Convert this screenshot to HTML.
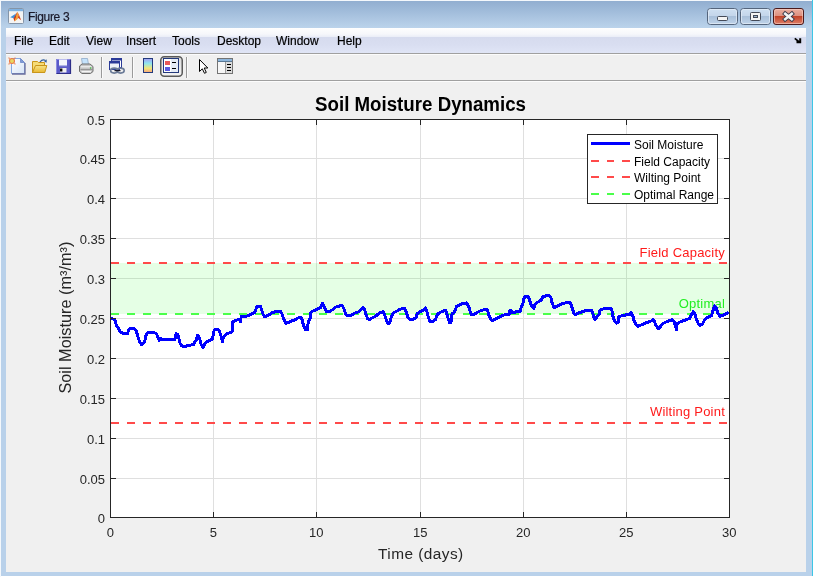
<!DOCTYPE html>
<html><head><meta charset="utf-8">
<style>
html,body{margin:0;padding:0;width:814px;height:577px;overflow:hidden;background:#fff;}
body{position:relative;font-family:"Liberation Sans",sans-serif;}
.abs{position:absolute;}
svg,.menu,.ttxt{will-change:transform;}
#frame{left:0;top:0;width:813px;height:576px;background:#b9d1ea;}
#edgeL{left:0;top:0;width:1px;height:577px;background:#f4f8fc;}
#edgeT{left:0;top:0;width:813px;height:1px;background:#f4f8fc;}
#title{left:1px;top:1px;width:811px;height:27px;background:linear-gradient(#91aed0,#bbd3eb);}
#cyan{left:812px;top:0;width:1px;height:576px;background:#3cc6e6;}
#menubar{left:6px;top:28px;width:800px;height:25px;background:linear-gradient(#fefefe 0,#f6f7fb 6px,#eceff8 8.5px,#d6dbee 9.5px,#d9def1 17px,#e0e5f6 25px);}
#menuline{left:6px;top:53px;width:800px;height:1px;background:#a0a0a0;}
#toolbar{left:6px;top:54px;width:800px;height:26px;background:linear-gradient(#fcfcfc 0,#fcfcfc 1px,#f0f0f0 1px);}
#toolline{left:6px;top:80px;width:800px;height:1px;background:#a0a0a0;}
#figbg{left:6px;top:81px;width:800px;height:491px;background:linear-gradient(#fcfcfc 0,#fcfcfc 1px,#f0f0f0 1px);}
.menu{position:absolute;top:34px;font-size:12px;color:#000;-webkit-text-stroke:0.2px #000;}
.ttxt{position:absolute;left:28px;top:10px;font-size:12px;letter-spacing:-0.35px;color:#1a1a2a;-webkit-text-stroke:0.2px #1a1a2a;}
</style></head><body>
<div id="frame" class="abs"></div>
<div id="edgeL" class="abs"></div>
<div id="edgeT" class="abs"></div>
<div id="title" class="abs"></div>
<div id="cyan" class="abs"></div>
<div id="menubar" class="abs"></div>
<div id="menuline" class="abs"></div>
<div id="toolbar" class="abs"></div>
<div id="toolline" class="abs"></div>
<div id="figbg" class="abs"></div>
<div class="ttxt">Figure 3</div>
<div class="menu" style="left:14px">File</div>
<div class="menu" style="left:49px">Edit</div>
<div class="menu" style="left:86px">View</div>
<div class="menu" style="left:126px">Insert</div>
<div class="menu" style="left:172px">Tools</div>
<div class="menu" style="left:217px">Desktop</div>
<div class="menu" style="left:276px">Window</div>
<div class="menu" style="left:337px">Help</div>

<svg class="abs" style="left:0;top:0" width="814" height="90" viewBox="0 0 814 90">
  <defs>
    <linearGradient id="tb" x1="0" y1="0" x2="0" y2="1">
      <stop offset="0" stop-color="#cfe0f2"/><stop offset="0.5" stop-color="#c3d5ea"/>
      <stop offset="0.5" stop-color="#a9c0da"/><stop offset="1" stop-color="#c0d4ea"/>
    </linearGradient>
    <linearGradient id="cb" x1="0" y1="0" x2="0" y2="1">
      <stop offset="0" stop-color="#eab0a2"/><stop offset="0.5" stop-color="#dc8d7c"/>
      <stop offset="0.5" stop-color="#c24329"/><stop offset="1" stop-color="#e0826b"/>
    </linearGradient>
    <linearGradient id="cbar" x1="0" y1="0" x2="0" y2="1">
      <stop offset="0" stop-color="#a49cf4"/><stop offset="0.35" stop-color="#8ee6ee"/>
      <stop offset="0.7" stop-color="#f2e676"/><stop offset="1" stop-color="#f8a47e"/>
    </linearGradient>
    <linearGradient id="page" x1="0" y1="0" x2="1" y2="1">
      <stop offset="0" stop-color="#ffffff"/><stop offset="1" stop-color="#d6e4f6"/>
    </linearGradient>
    <linearGradient id="fold" x1="0" y1="0" x2="0" y2="1">
      <stop offset="0" stop-color="#f8e48a"/><stop offset="1" stop-color="#e8b830"/>
    </linearGradient>
    <linearGradient id="pbtn" x1="0" y1="0" x2="0" y2="1">
      <stop offset="0" stop-color="#dcdcdc"/><stop offset="1" stop-color="#f4f4f4"/>
    </linearGradient>
  </defs>
  <!-- title icon -->
  <rect x="8.5" y="8.5" width="15" height="15" rx="1" fill="#f4f4f4" stroke="#8595a8"/>
  <rect x="9" y="9" width="14" height="2" fill="#7fb2e2"/>
  <path d="M9 11.5H23" stroke="#c8dcef" stroke-width="0.6"/>
  <path d="M10.2 17.3L16 13.4L14.6 18.6Z" fill="#3f90d8"/>
  <path d="M13.6 18.6L17.3 11.8L16.5 17L14.4 21.5Z" fill="#c83a1a"/>
  <path d="M17.3 11.8L18.5 15.5L17 19.5L14.4 21.5L16.2 16.5Z" fill="#f4a02e"/>
  <path d="M17.3 11.8L19 14.8L21.2 20.2L18.2 18L17 19.5L18.5 15.5Z" fill="#dc4a20"/>
  <!-- title buttons -->
  <rect x="707.5" y="8.5" width="30" height="16" rx="3" fill="url(#tb)" stroke="#55657c"/>
  <rect x="708.5" y="9.5" width="28" height="14" rx="2" fill="none" stroke="#e6eef8" stroke-opacity="0.7"/>
  <rect x="717.5" y="16.5" width="10" height="4" rx="1" fill="#f4f4f4" stroke="#444a58"/>
  <rect x="740.5" y="8.5" width="30" height="16" rx="3" fill="url(#tb)" stroke="#55657c"/>
  <rect x="741.5" y="9.5" width="28" height="14" rx="2" fill="none" stroke="#e6eef8" stroke-opacity="0.7"/>
  <rect x="750.5" y="12.5" width="10" height="8" rx="1" fill="#f4f4f4" stroke="#444a58"/>
  <rect x="753.5" y="15.5" width="4" height="2" fill="#9fb6d0" stroke="#444a58"/>
  <rect x="773.5" y="8.5" width="30" height="16" rx="2.5" fill="url(#cb)" stroke="#4a1a1c"/>
  <rect x="774.5" y="9.5" width="28" height="14" rx="2" fill="none" stroke="#f6d0c6" stroke-opacity="0.6"/>
  <path d="M785.2 13.8L791.8 19.2M791.8 13.8L785.2 19.2" stroke="#3a3a4a" stroke-width="4.4" stroke-linecap="square"/>
  <path d="M785.2 13.8L791.8 19.2M791.8 13.8L785.2 19.2" stroke="#f2f2f2" stroke-width="2.6" stroke-linecap="square"/>
  <!-- dock arrow -->
  <path d="M794.8 38.4L799.2 42" stroke="#000" stroke-width="1.7"/><path d="M796.5 41H799.2V38.2H801.2V43.2H796.5Z" fill="#000"/>
  <!-- toolbar icons -->
  <!-- new -->
  <path d="M11.5 58.5H20.5L24.5 62.5V73.5H11.5Z" fill="url(#page)" stroke="#86a6e0"/>
  <path d="M12 74H25V63" stroke="#6a6e9c" fill="none" stroke-width="1.3"/>
  <path d="M20.5 58.5V62.5H24.5Z" fill="#7f9ad6" stroke="#6c86c8" stroke-width="0.8"/>
  <circle cx="12" cy="61" r="2.5" fill="#e8d860" stroke="#ec7a48" stroke-width="1.1"/>
  <path d="M8.6 57.6L9.6 58.6M15.4 57.6L14.4 58.6M8.6 64.4L9.6 63.4M15.4 64.4L14.4 63.4" stroke="#ec7a48" stroke-width="1.1"/>
  <!-- open -->
  <path d="M32.5 72.5V61.5H37.5L38.5 62.5H44.5V72.5Z" fill="#f6dc78" stroke="#c9951a"/>
  <path d="M35.5 65.5H46.8L44.8 72.5H32.5Z" fill="url(#fold)" stroke="#c9951a"/>
  <path d="M40 62Q42.5 58.8 45.6 60.6" stroke="#35609c" stroke-width="1.2" fill="none"/>
  <path d="M44.2 61.6L46.8 59.2L46.6 62.8Z" fill="#35609c"/>
  <!-- save -->
  <rect x="56" y="59" width="14.5" height="14.5" fill="#5a5ac8"/>
  <path d="M56.5 73.5V59.5H70" stroke="#8a8ae0" stroke-width="1" fill="none"/>
  <path d="M56.5 73.5H70.5V59.5" stroke="#2e2e88" stroke-width="1.2" fill="none"/>
  <rect x="59" y="59.5" width="8" height="6" fill="#f2f4fb"/>
  <path d="M59 65.8H67" stroke="#b8bce8" stroke-width="0.8"/>
  <rect x="60" y="68" width="6.5" height="4.5" fill="#f0f0f0"/>
  <rect x="60" y="68.5" width="2.4" height="3" fill="#0c0c0c"/>
  <!-- print -->
  <path d="M81.5 58.5H87.5L88.5 64.5H82.5Z" fill="#c4e2fb" stroke="#90aac8" stroke-width="0.8"/>
  <path d="M79.5 66L82 64H90L93 66.5V71.5L90.5 73.5H82L79.5 71.5Z" fill="#c4c4c4" stroke="#6e6e6e"/>
  <path d="M81 66.8H91.5" stroke="#f2f2f2" stroke-width="1.2"/>
  <path d="M80.5 69.5H92.5" stroke="#8a8a8a" stroke-width="0.8"/>
  <path d="M81.5 71.6H91" stroke="#f4f4f4" stroke-width="1.2"/>
  <circle cx="90.6" cy="68" r="0.8" fill="#35c035"/>
  <!-- separators -->
  <path d="M101.5 57V78M132.5 57V78M186.5 57V78" stroke="#9a9a9a" stroke-width="1"/>
  <path d="M102.5 57V78M133.5 57V78M187.5 57V78" stroke="#ffffff" stroke-width="1" stroke-opacity="0.7"/>
  <!-- link -->
  <rect x="111.5" y="58.5" width="10" height="9" fill="#fff" stroke="#2a3a98"/>
  <rect x="111" y="58" width="11" height="2.5" fill="#2a3a98"/>
  <rect x="109.5" y="61.5" width="10" height="8" fill="#eef2f8" stroke="#2a3a98"/>
  <rect x="109" y="61" width="11" height="2.5" fill="#2a3a98"/>
  <ellipse cx="114.2" cy="70.6" rx="3.6" ry="2.5" fill="none" stroke="#6c7c98" stroke-width="1.6"/>
  <ellipse cx="120.6" cy="70.6" rx="3.6" ry="2.5" fill="none" stroke="#6c7c98" stroke-width="1.6"/>
  <path d="M114.5 70.6H120.5" stroke="#1a1a2a" stroke-width="1.3"/>
  <!-- colorbar -->
  <rect x="143.5" y="58.5" width="9" height="14" fill="url(#cbar)" stroke="#243a7c"/>
  <!-- legend pressed -->
  <rect x="160.75" y="56.75" width="21.5" height="19.5" rx="3.5" fill="url(#pbtn)" stroke="#5a5a5a" stroke-width="1.5"/>
  <rect x="163.5" y="58.5" width="15" height="14" fill="#fff" stroke="#243a7c"/>
  <rect x="171" y="59" width="7" height="13" fill="#e6ecf6"/>
  <rect x="165" y="61" width="5" height="4" fill="#e85858"/>
  <rect x="165" y="67" width="5" height="4" fill="#5a5ae0"/>
  <path d="M172 62.5H176M172 68.5H176" stroke="#000" stroke-width="1.2"/>
  <!-- arrow cursor -->
  <path d="M199.5 59.5V71.5L202.3 68.8L204.5 73.3L206.3 72.4L204.2 68H207.8Z" fill="#fff" stroke="#000" stroke-width="1" stroke-linejoin="miter"/>
  <!-- property -->
  <rect x="217.5" y="58.5" width="15" height="15" fill="#f6f6f6" stroke="#747474"/>
  <rect x="218" y="59" width="14" height="2.5" fill="#8db6dc"/>
  <path d="M218 61.5H232" stroke="#5a7894" stroke-width="1"/>
  <rect x="226" y="62" width="6" height="11" fill="#dcdcdc"/>
  <path d="M225.5 62V73" stroke="#9a9a9a"/>
  <path d="M227 64.5H231M227 67.5H231M227 70.5H231" stroke="#000" stroke-width="1.2"/>
</svg>


<svg class="abs" style="left:0;top:0" width="814" height="577" viewBox="0 0 814 577">
  <defs><clipPath id="ax"><rect x="110" y="119" width="620" height="399"/></clipPath></defs>
  <rect x="110" y="119" width="620" height="399" fill="#fff"/>
  <path d="M213.5 120V517M316.5 120V517M420.5 120V517M523.5 120V517M626.5 120V517M111 478.5H729M111 438.5H729M111 398.5H729M111 358.5H729M111 318.5H729M111 278.5H729M111 238.5H729M111 198.5H729M111 158.5H729" stroke="#dfdfdf" stroke-width="1" fill="none" shape-rendering="crispEdges"/>
  <rect x="111" y="263" width="618" height="51" fill="#00ff00" fill-opacity="0.1"/>
  <g stroke-width="2" fill="none" stroke-dasharray="8 8" shape-rendering="crispEdges">
    <path d="M111 263H729" stroke="#ff4a4a"/>
    <path d="M111 423H729" stroke="#ff4a4a"/>
    <path d="M111 314H729" stroke="#4aff4a"/>
  </g>
  <g font-family="Liberation Sans" font-size="13" letter-spacing="0.22">
    <text x="725" y="257" text-anchor="end" fill="#ff1a1a">Field Capacity</text>
    <text x="725" y="308" text-anchor="end" fill="#22ee22">Optimal</text>
    <text x="725" y="416" text-anchor="end" fill="#ff1a1a">Wilting Point</text>
  </g>
  <path clip-path="url(#ax)" d="M110.6 318.6 L113.9 319.2 L115.6 321.2 L116.2 324.8 L118.5 328.5 L120.2 331.8 L122.5 333.1 L127.8 333.4 L128.4 329.8 L129.7 328.5 L134.4 329.0 L136.3 331.1 L137.6 335.7 L139.6 341.6 L141.9 344.9 L144.9 341.0 L145.9 335.7 L147.5 332.8 L150.2 332.4 L155.4 333.1 L156.6 334.1 L158.0 337.8 L159.3 340.4 L160.9 338.4 L162.2 339.4 L174.8 339.4 L176.1 333.8 L177.7 334.5 L178.7 337.8 L179.7 342.4 L181.0 345.0 L182.7 346.3 L186.0 346.3 L188.6 345.3 L193.9 344.7 L194.5 341.7 L196.2 340.4 L197.5 335.5 L199.1 337.1 L200.5 341.7 L201.3 344.9 L203.0 347.2 L204.3 344.9 L205.9 342.3 L208.6 341.0 L212.8 338.7 L213.2 334.4 L214.2 330.4 L215.8 329.5 L217.8 329.0 L219.4 331.4 L221.1 336.4 L222.4 341.6 L223.4 337.7 L226.0 334.4 L227.7 333.4 L231.0 332.4 L232.6 330.8 L232.3 326.5 L232.9 321.9 L234.9 320.6 L237.2 319.9 L240.2 319.6 L240.3 321.9 L241.2 316.6 L243.5 316.0 L247.4 316.0 L248.3 315.8 L251.6 314.1 L254.9 312.5 L256.5 307.2 L258.2 306.2 L260.5 306.6 L261.8 310.5 L263.4 315.1 L264.8 316.8 L267.4 315.5 L270.0 314.1 L272.7 312.5 L276.6 311.5 L280.6 311.5 L281.9 313.8 L283.2 317.8 L285.8 323.4 L288.5 322.7 L292.4 320.4 L294.0 320.4 L297.9 318.1 L300.5 317.1 L301.9 319.1 L303.2 324.3 L305.2 329.6 L307.8 329.6 L308.1 322.4 L310.1 318.4 L310.4 313.1 L312.7 311.2 L317.7 308.8 L321.0 307.2 L322.3 303.4 L323.3 304.4 L324.6 307.9 L326.2 311.5 L329.5 311.5 L332.8 309.5 L336.1 306.9 L338.3 306.5 L341.9 305.2 L343.9 308.5 L345.5 313.8 L346.9 315.8 L350.2 315.8 L352.8 314.4 L355.4 312.8 L359.4 311.5 L362.7 307.5 L364.3 308.8 L366.0 314.4 L367.6 318.7 L369.3 319.7 L371.9 318.1 L375.8 316.1 L379.1 313.1 L383.3 311.5 L384.9 315.8 L386.6 320.4 L388.2 323.7 L389.9 322.4 L391.2 317.1 L393.2 313.1 L396.5 311.2 L399.8 309.5 L402.7 308.5 L405.0 308.8 L406.4 312.5 L407.7 317.1 L409.6 319.4 L412.9 319.4 L416.2 317.7 L417.2 313.8 L419.5 311.8 L422.8 310.5 L425.5 307.9 L426.8 311.2 L428.3 317.1 L430.3 322.0 L432.9 321.4 L435.5 319.7 L436.5 315.8 L438.8 313.1 L442.1 311.5 L445.4 310.2 L446.7 313.1 L448.1 318.4 L449.4 322.4 L451.0 322.4 L451.7 317.7 L452.0 313.8 L454.0 312.5 L455.6 309.2 L456.6 306.2 L459.3 305.2 L462.5 303.6 L466.5 302.9 L468.5 305.9 L469.8 310.5 L471.3 314.4 L474.0 314.7 L476.6 312.7 L480.5 310.7 L486.5 309.1 L487.8 311.1 L489.1 315.7 L491.1 319.6 L492.7 320.6 L496.4 318.6 L501.0 316.3 L505.6 314.4 L508.9 315.0 L509.9 310.4 L511.2 310.4 L512.8 313.0 L516.1 311.7 L517.6 312.0 L520.6 311.0 L521.3 306.1 L522.9 304.1 L523.6 299.5 L524.9 296.9 L527.8 296.2 L529.2 298.8 L530.5 303.4 L532.1 306.7 L533.8 308.7 L535.1 304.1 L537.7 302.1 L541.4 300.2 L542.7 296.9 L544.6 296.2 L548.6 295.2 L550.9 297.8 L551.9 302.1 L553.9 307.4 L556.5 306.7 L561.1 304.1 L563.3 303.5 L566.6 302.5 L569.6 302.2 L571.2 304.5 L572.5 309.1 L573.8 313.1 L575.2 314.7 L578.4 313.1 L582.4 311.7 L587.7 310.1 L591.6 310.1 L592.9 313.7 L594.3 319.0 L595.9 319.0 L596.9 316.4 L599.2 314.4 L599.9 310.4 L602.8 309.1 L607.4 308.1 L608.3 308.2 L611.3 308.5 L612.2 311.8 L612.9 316.4 L614.6 321.0 L616.5 323.3 L618.2 322.4 L618.2 317.1 L620.8 316.1 L624.8 315.1 L630.0 314.4 L631.0 312.8 L632.7 315.1 L634.0 320.4 L636.0 325.0 L637.9 326.3 L641.9 324.7 L647.2 322.4 L651.1 321.0 L653.2 319.4 L654.6 321.7 L655.9 325.6 L658.6 328.6 L659.9 327.6 L662.5 323.7 L667.1 321.4 L672.4 319.7 L674.0 321.7 L675.7 326.3 L676.4 329.6 L677.0 323.7 L679.0 322.4 L684.3 320.4 L689.5 318.4 L690.8 315.8 L693.3 311.8 L694.9 314.2 L696.2 318.4 L698.3 323.9 L699.7 325.3 L702.5 323.9 L704.6 319.7 L707.3 317.7 L711.5 315.6 L712.9 310.7 L714.3 306.0 L716.0 307.3 L717.7 312.8 L719.8 316.3 L723.3 315.2 L726.8 313.5 L728.8 312.5" stroke="#0000ff" stroke-width="3" fill="none" stroke-linejoin="round" stroke-linecap="butt" shape-rendering="crispEdges"/>
  <path d="M213.5 517V512M213.5 119V125M316.5 517V512M316.5 119V125M420.5 517V512M420.5 119V125M523.5 517V512M523.5 119V125M626.5 517V512M626.5 119V125M110 478.5H116M729 478.5H724M110 438.5H116M729 438.5H724M110 398.5H116M729 398.5H724M110 358.5H116M729 358.5H724M110 318.5H116M729 318.5H724M110 278.5H116M729 278.5H724M110 238.5H116M729 238.5H724M110 198.5H116M729 198.5H724M110 158.5H116M729 158.5H724" stroke="#262626" stroke-width="1" fill="none" shape-rendering="crispEdges"/>
  <rect x="110.5" y="119.5" width="619" height="398" stroke="#262626" stroke-width="1" fill="none" shape-rendering="crispEdges"/>
  <g font-family="Liberation Sans" font-size="13" fill="#262626"><text x="105" y="523" text-anchor="end">0</text><text x="105" y="484" text-anchor="end">0.05</text><text x="105" y="444" text-anchor="end">0.1</text><text x="105" y="404" text-anchor="end">0.15</text><text x="105" y="364" text-anchor="end">0.2</text><text x="105" y="324" text-anchor="end">0.25</text><text x="105" y="284" text-anchor="end">0.3</text><text x="105" y="244" text-anchor="end">0.35</text><text x="105" y="204" text-anchor="end">0.4</text><text x="105" y="164" text-anchor="end">0.45</text><text x="105" y="125" text-anchor="end">0.5</text><text x="110.3" y="537" text-anchor="middle">0</text><text x="213.3" y="537" text-anchor="middle">5</text><text x="316.3" y="537" text-anchor="middle">10</text><text x="420.3" y="537" text-anchor="middle">15</text><text x="523.3" y="537" text-anchor="middle">20</text><text x="626.3" y="537" text-anchor="middle">25</text><text x="729.3" y="537" text-anchor="middle">30</text></g>
  <text x="420.8" y="559" text-anchor="middle" font-family="Liberation Sans" font-size="15.4" letter-spacing="0.45" fill="#262626">Time (days)</text>
  <text transform="translate(70.8,317.6) rotate(-90)" text-anchor="middle" font-family="Liberation Sans" font-size="16.3" fill="#262626">Soil Moisture (m³/m³)</text>
  <text transform="translate(420.5,111.2) scale(1,1.07)" text-anchor="middle" font-family="Liberation Sans" font-size="18.7" font-weight="bold" fill="#000">Soil Moisture Dynamics</text>
  <rect x="587.5" y="134.5" width="130" height="69" fill="#fff" stroke="#262626" stroke-width="1" shape-rendering="crispEdges"/>
  <path d="M591 143.5H630" stroke="#0000ff" stroke-width="3" shape-rendering="crispEdges"/>
  <g stroke-width="2" stroke-dasharray="7.5 8" shape-rendering="crispEdges">
    <path d="M591 161H630" stroke="#ff4a4a"/>
    <path d="M591 177H630" stroke="#ff4a4a"/>
    <path d="M591 194H630" stroke="#4aff4a"/>
  </g>
  <g font-family="Liberation Sans" font-size="12" fill="#000">
    <text x="634" y="149">Soil Moisture</text>
    <text x="634" y="165.5">Field Capacity</text>
    <text x="634" y="182">Wilting Point</text>
    <text x="634" y="198.5">Optimal Range</text>
  </g>
</svg>

</body></html>
